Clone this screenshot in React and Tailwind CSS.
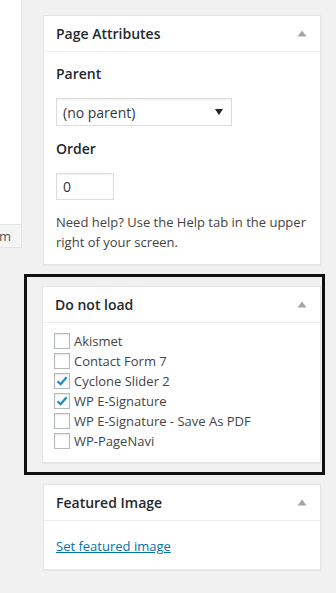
import { useState } from "react";

const font = { fontFamily: '"Open Sans", "Liberation Sans", sans-serif' };

function Toggle() {
  return (
    <svg width="10" height="7" viewBox="0 0 10 7" className="mr-[1px]">
      <path d="M5 0.5 L9.5 6.5 L0.5 6.5 Z" fill="#a0a5aa" />
    </svg>
  );
}

function Panel({ title, children, className = "" }) {
  return (
    <div className={"bg-white border border-[#e5e5e5] shadow-[0_1px_1px_rgba(0,0,0,0.04)] " + className}>
      <div className="flex items-center justify-between h-[36px] pl-[12px] pr-[12px] border-b border-[#eeeeee]">
        <h2 className="text-[14px] font-semibold text-[#23282d] leading-[20px]">{title}</h2>
        <Toggle />
      </div>
      {children}
    </div>
  );
}

function Check({ label, checked }) {
  return (
    <label className="flex items-center gap-[4px] h-[20px] text-[13px] text-[#444] leading-[20px]">
      <span className="w-[16px] h-[16px] border border-[#b4b9be] bg-white shadow-[inset_0_1px_2px_rgba(0,0,0,0.1)] flex items-center justify-center">
        {checked && (
          <svg width="14" height="14" viewBox="0 0 14 14">
            <path d="M2.5 7.2 L5.6 10.2 L11.6 3.2" stroke="#1e8cbe" strokeWidth="2.2" fill="none" />
          </svg>
        )}
      </span>
      {label}
    </label>
  );
}

export default function App() {
  const [plugins] = useState([
    { name: "Akismet", checked: false },
    { name: "Contact Form 7", checked: false },
    { name: "Cyclone Slider 2", checked: true },
    { name: "WP E-Signature", checked: true },
    { name: "WP E-Signature - Save As PDF", checked: false },
    { name: "WP-PageNavi", checked: false },
  ]);

  return (
    <div className="w-[336px] h-[593px] bg-[#f1f1f1] flex overflow-hidden" style={font}>
      <div className="w-[22px] shrink-0">
        <div className="h-[224px] bg-white border-r border-[#e5e5e5]" />
        <div className="h-[24px] bg-[#f5f5f5] border-t border-r border-b border-[#e5e5e5] text-[13px] text-[#555] leading-[22px] overflow-hidden">
          <span className="-ml-[1px]">m</span>
        </div>
      </div>

      <div className="ml-[2px] w-[301px] shrink-0 pt-[15px]">
        <Panel title="Page Attributes" className="ml-[19px] w-[278px]">
          <div className="px-[12px] pb-[12px]">
            <p className="mt-[12px] text-[14px] font-semibold text-[#23282d] leading-[20px]">Parent</p>
            <div className="mt-[14px] w-[176px] h-[28px] border border-[#dddddd] flex items-center justify-between pl-[6px] pr-[8px] shadow-[inset_0_1px_2px_rgba(0,0,0,0.07)]">
              <span className="text-[14px] text-[#32373c]">(no parent)</span>
              <svg width="8" height="6" viewBox="0 0 8 6">
                <path d="M0 0 L8 0 L4 6 Z" fill="#222" />
              </svg>
            </div>
            <p className="mt-[13px] text-[14px] font-semibold text-[#23282d] leading-[20px]">Order</p>
            <div className="mt-[14px] w-[58px] h-[27px] border border-[#dddddd] flex items-center pl-[6px] text-[14px] text-[#32373c] shadow-[inset_0_1px_2px_rgba(0,0,0,0.07)]">
              0
            </div>
            <p className="mt-[13px] text-[13px] text-[#444] leading-[19.5px]">
              Need help? Use the Help tab in the upper right of your screen.
            </p>
          </div>
        </Panel>

        <div className="mt-[9px] border-[3px] border-[#111] pt-[9px] pb-[9px] pl-[15px]">
          <Panel title="Do not load" className="w-[279px]">
            <div className="pl-[11px] pt-[8px] pb-[11px] flex flex-col">
              {plugins.map((p) => (
                <Check key={p.name} label={p.name} checked={p.checked} />
              ))}
            </div>
          </Panel>
        </div>

        <Panel title="Featured Image" className="mt-[9px] ml-[19px] w-[278px]">
          <div className="px-[12px] pt-[12px] pb-[12px]">
            <a href="#" className="text-[13px] text-[#0073aa] underline leading-[20px]">
              Set featured image
            </a>
          </div>
        </Panel>
      </div>
    </div>
  );
}
